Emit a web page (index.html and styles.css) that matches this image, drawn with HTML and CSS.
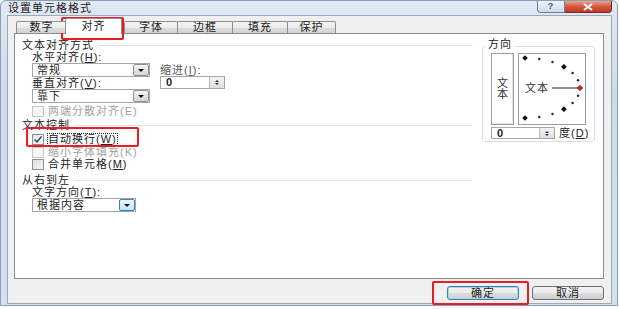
FILE: index.html
```html
<!DOCTYPE html>
<html lang="zh-CN">
<head>
    <meta charset="UTF-8">
    <title>设置单元格格式</title>
    <link rel="stylesheet" href="styles.css">
</head>
<body>

<div class="window">
    <div class="titlebar">
        <span class="title">设置单元格格式</span>
        <div class="caption">
            <span class="cap-btn help">?</span>
            <span class="cap-btn close">
                <svg width="12" height="8" viewBox="0 0 12 8"><path d="M2 1 L10 7 M10 1 L2 7" stroke="#fff" stroke-width="2"/></svg>
            </span>
        </div>
    </div>

    <div class="client">
        <div class="tabs">
            <span class="tab t-num">数字</span>
            <span class="tab t-align active">对齐</span>
            <span class="tab t-font">字体</span>
            <span class="tab t-border">边框</span>
            <span class="tab t-fill">填充</span>
            <span class="tab t-protect">保护</span>
        </div>

        <div class="panel">
            <div class="left-col">
                <div class="section"><span>文本对齐方式</span><i class="rule"></i></div>
                <div class="align-rows">
                    <div class="align-main">
                        <div class="label l1">水平对齐(<u>H</u>):</div>
                        <div class="select"><span>常规</span><b class="drop"></b></div>
                        <div class="label l2">垂直对齐(<u>V</u>):</div>
                        <div class="select"><span>靠下</span><b class="drop"></b></div>
                        <div class="check disabled first"><i class="box"></i><span>两端分散对齐(E)</span></div>
                    </div>
                    <div class="indent">
                        <div class="label">缩进(<u>I</u>):</div>
                        <div class="spin"><span>0</span><b class="spin-btn"></b></div>
                    </div>
                </div>

                <div class="section"><span>文本控制</span><i class="rule"></i></div>
                <div class="items">
                    <div class="check tall">
                        <i class="box checked">
                            <svg width="10" height="9" viewBox="0 0 10 9"><path d="M1.5 4.5 L4 7 L8.5 1.5" fill="none" stroke="#2c3e58" stroke-width="1.4"/></svg>
                        </i>
                        <span class="focus">自动换行(<u>W</u>)</span>
                    </div>
                    <div class="check disabled"><i class="box"></i><span>缩小字体填充(K)</span></div>
                    <div class="check"><i class="box"></i><span>合并单元格(<u>M</u>)</span></div>
                </div>

                <div class="section s3"><span>从右到左</span><i class="rule"></i></div>
                <div class="items">
                    <div class="label l3">文字方向(<u>T</u>):</div>
                    <div class="select narrow"><span>根据内容</span><b class="drop hot"></b></div>
                </div>
            </div>

            <div class="orient">
                <span class="legend">方向</span>
                <div class="dial-row">
                    <div class="vtext"><span>文</span><span>本</span></div>
                    <div class="dial">
                        <svg width="66" height="70" viewBox="0 0 66 70">
                            <rect x="4" y="2" width="4" height="4" fill="#111" transform="rotate(45 6 4)"/>
                            <circle cx="20.2" cy="5" r="1.2" fill="#222"/>
                            <circle cx="33.5" cy="8" r="1.2" fill="#222"/>
                            <rect x="42.9" y="10.8" width="4" height="4" fill="#111" transform="rotate(45 44.9 12.8)"/>
                            <circle cx="53.6" cy="19" r="1.2" fill="#222"/>
                            <circle cx="59.1" cy="26.2" r="1.2" fill="#222"/>
                            <line x1="33" y1="34" x2="61" y2="34" stroke="#222" stroke-width="1"/>
                            <rect x="59" y="32" width="4" height="4" fill="#e0201c" stroke="#700" stroke-width="0.5" transform="rotate(45 61 34)"/>
                            <circle cx="59.1" cy="41.8" r="1.2" fill="#222"/>
                            <circle cx="53.6" cy="49" r="1.2" fill="#222"/>
                            <rect x="42.9" y="53.2" width="4" height="4" fill="#111" transform="rotate(45 44.9 55.2)"/>
                            <circle cx="33.5" cy="60" r="1.2" fill="#222"/>
                            <circle cx="20.2" cy="63" r="1.2" fill="#222"/>
                            <rect x="4" y="62" width="4" height="4" fill="#111" transform="rotate(45 6 64)"/>
                            <text x="6" y="38" font-size="11" letter-spacing="1" fill="#333" font-family="Noto Sans CJK SC, sans-serif">文本</text>
                        </svg>
                    </div>
                </div>
                <div class="deg-row">
                    <div class="spin small"><span>0</span><b class="spin-btn"></b></div>
                    <span>度(<u>D</u>)</span>
                </div>
            </div>
        </div>

        <div class="buttons">
            <span class="btn default">确定</span>
            <span class="btn">取消</span>
        </div>
    </div>

    <div class="mark mark-tab"></div>
    <div class="mark mark-wrap"></div>
    <div class="mark mark-ok"></div>
</div>

</body>
</html>
```

FILE: styles.css
```css
body {
    margin: 0;
    background: #fff;
    font-family: "Liberation Sans", "Noto Sans CJK SC", sans-serif;
    font-size: 11px;
    letter-spacing: 1px;
    color: #222;
}
u {
    text-decoration: underline;
}
.window {
    position: relative;
    width: 618px;
    height: 306px;
    box-sizing: border-box;
    display: flex;
    flex-direction: column;
    background: linear-gradient(#e1e9f3, #cddbeb 30%, #d4e1ef);
    border: 1px solid #8a9db3;
    border-radius: 6px 6px 0 0;
}
.titlebar {
    display: flex;
    align-items: flex-start;
    height: 14px;
    padding-left: 7px;
    margin-right: 5px;
}
.title {
    line-height: 14px;
    color: #222;
}
.caption {
    margin-left: auto;
    display: flex;
}
.cap-btn {
    box-sizing: border-box;
    height: 12px;
    display: flex;
    align-items: center;
    justify-content: center;
    border: 1px solid #6f7f93;
    border-top: none;
    font-size: 9px;
    font-weight: bold;
    line-height: 11px;
}
.help {
    width: 28px;
    border-radius: 0 0 0 4px;
    background: linear-gradient(#eef3f9, #cfdae7);
    color: #4a5668;
}
.close {
    width: 47px;
    border-left: none;
    border-radius: 0 0 4px 0;
    background: linear-gradient(#eaa595, #d6563f 50%, #c13a23);
    border-color: #6e2a20;
}
.client {
    flex: 1;
    margin: 0 5px 1px 6px;
    box-sizing: border-box;
    border: 1px solid #9aa9bb;
    background: #f0f0f0;
    padding: 2px 7px 0 6px;
}
.tabs {
    position: relative;
    z-index: 1;
    display: flex;
    align-items: flex-end;
    height: 16px;
    margin-bottom: -1px;
    padding-left: 2px;
}
.tab {
    box-sizing: border-box;
    height: 12px;
    margin-bottom: 1px;
    margin-left: -1px;
    border: 1px solid #8e8f8f;
    border-bottom: none;
    border-radius: 2px 2px 0 0;
    background: linear-gradient(#f4f4f4, #ebebeb 50%, #dddddd 51%, #d2d2d2);
    text-align: center;
    line-height: 11px;
}
.t-num { width: 51px; margin-left: 0; }
.t-align { width: 57px; margin-left: -2px; }
.t-font { width: 54px; margin-left: 2px; }
.t-border { width: 56px; }
.t-fill { width: 56px; }
.t-protect { width: 49px; }
.tab.active {
    height: 16px;
    margin-bottom: 0;
    background: #fff;
    line-height: 14px;
    position: relative;
    z-index: 2;
}
.panel {
    box-sizing: border-box;
    height: 246px;
    display: flex;
    align-items: flex-start;
    padding: 4px 0 0 7px;
    border: 1px solid #898c95;
    background: #fff;
}
.left-col {
    width: 450px;
}
.section {
    display: flex;
    align-items: center;
    gap: 4px;
    height: 14px;
    line-height: 14px;
}
.section.s3 {
    margin-top: 3px;
}
.rule {
    flex: 1;
    height: 1px;
    background: #dae2ea;
}
.align-rows {
    display: flex;
    padding-left: 10px;
}
.items {
    padding-left: 10px;
}
.label {
    white-space: nowrap;
}
.l1 { height: 11px; line-height: 11px; }
.l2 { height: 12px; line-height: 12px; }
.l3 { height: 11px; line-height: 11px; }
.select {
    box-sizing: border-box;
    width: 118px;
    height: 14px;
    display: flex;
    justify-content: space-between;
    border: 1px solid #a3a6ad;
    background: #fff;
    line-height: 12px;
}
.select span {
    padding-left: 4px;
}
.select.narrow {
    width: 104px;
}
.drop {
    box-sizing: border-box;
    width: 16px;
    height: 12px;
    display: flex;
    align-items: center;
    justify-content: center;
    border: 1px solid #8e9196;
    border-radius: 2px;
    background: linear-gradient(#f5f5f5, #e4e4e4 50%, #d4d4d4);
}
.drop::after {
    content: "";
    border-left: 3px solid transparent;
    border-right: 3px solid transparent;
    border-top: 3px solid #111;
}
.drop.hot {
    border-color: #3c7fb1;
    background: linear-gradient(#eaf6fd, #d7effc 50%, #bde6fd);
}
.indent {
    margin-left: 10px;
    padding-top: 12px;
}
.indent .label {
    height: 12px;
    line-height: 12px;
    color: #555;
}
.spin {
    box-sizing: border-box;
    width: 65px;
    height: 13px;
    display: flex;
    justify-content: space-between;
    border: 1px solid #a3a6ad;
    background: #fff;
    line-height: 11px;
    font-weight: bold;
}
.spin span {
    padding-left: 5px;
}
.spin.small {
    width: 64px;
    height: 12px;
    line-height: 10px;
}
.spin-btn {
    box-sizing: border-box;
    width: 15px;
    height: 100%;
    display: flex;
    flex-direction: column;
    align-items: center;
    justify-content: center;
    gap: 1px;
    border-left: 1px solid #b9bcc1;
    background: linear-gradient(#f4f4f4, #dedede);
}
.spin-btn::before {
    content: "";
    border-left: 2px solid transparent;
    border-right: 2px solid transparent;
    border-bottom: 2px solid #333;
}
.spin-btn::after {
    content: "";
    border-left: 2px solid transparent;
    border-right: 2px solid transparent;
    border-top: 2px solid #333;
}
.check {
    display: flex;
    align-items: center;
    gap: 4px;
    height: 12px;
    line-height: 12px;
    white-space: nowrap;
}
.check.first {
    margin-top: 1px;
    height: 14px;
}
.check.tall {
    height: 14px;
}
.box {
    box-sizing: border-box;
    width: 12px;
    height: 11px;
    display: flex;
    align-items: center;
    justify-content: center;
    border: 1px solid #8f8f8f;
    background: linear-gradient(135deg, #dcdcdc, #f7f7f7);
}
.box.checked {
    background: linear-gradient(135deg, #e4e9ef, #fafafa);
}
.check.disabled {
    color: #a2a2a2;
}
.check.disabled .box {
    border-color: #c8c8c8;
    background: #f6f6f6;
}
.focus {
    outline: 1px dotted #222;
    line-height: 11px;
}
.orient {
    box-sizing: border-box;
    width: 113px;
    height: 96px;
    margin: 8px 0 0 10px;
    padding-left: 8px;
    display: flex;
    flex-direction: column;
    align-items: flex-start;
    border: 1px solid #d5dfe5;
    border-radius: 3px;
}
.legend {
    margin: -10px 0 0 -5px;
    padding: 0 2px;
    background: #fff;
    line-height: 14px;
}
.dial-row {
    display: flex;
    gap: 4px;
    margin-top: 2px;
}
.vtext {
    box-sizing: border-box;
    width: 23px;
    height: 72px;
    display: flex;
    flex-direction: column;
    align-items: center;
    justify-content: center;
    border: 1px solid #9c9c9c;
    box-shadow: inset -1px -1px 0 #e6e6e6;
    line-height: 11px;
    letter-spacing: 0;
    color: #333;
}
.dial {
    box-sizing: border-box;
    width: 68px;
    height: 72px;
    border: 1px solid #9c9c9c;
}
.dial svg {
    display: block;
}
.deg-row {
    display: flex;
    align-items: center;
    gap: 4px;
    margin-top: 2px;
    line-height: 12px;
}
.buttons {
    display: flex;
    justify-content: flex-end;
    gap: 13px;
    margin-top: 7px;
}
.btn {
    box-sizing: border-box;
    width: 72px;
    height: 14px;
    border: 1px solid #707070;
    border-radius: 3px;
    background: linear-gradient(#f2f2f2, #ebebeb 50%, #dddddd 51%, #cfcfcf);
    text-align: center;
    line-height: 12px;
}
.btn.default {
    border-color: #3c7fb1;
    box-shadow: inset 0 0 0 1px #9fd9f5;
}
.mark {
    position: absolute;
    box-sizing: border-box;
    border: 2px solid #ec1c24;
    border-radius: 2px;
}
.mark-tab {
    left: 60px;
    top: 16px;
    width: 63px;
    height: 23px;
}
.mark-wrap {
    left: 25px;
    top: 126px;
    width: 113px;
    height: 20px;
}
.mark-ok {
    left: 431px;
    top: 280px;
    width: 97px;
    height: 24px;
}
```
